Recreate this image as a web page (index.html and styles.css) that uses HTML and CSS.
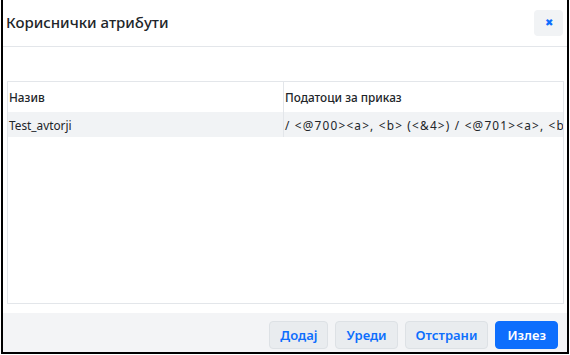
FILE: index.html
```html
<!DOCTYPE html>
<html lang="mk">
<head>
    <meta charset="UTF-8">
    <meta name="viewport" content="width=device-width, initial-scale=1.0">
    <title>Кориснички атрибути</title>
    <link rel="stylesheet" href="styles.css">
</head>
<body>
    <div class="modal">
        <div class="modal-header">
            <h5 class="modal-title">Кориснички атрибути</h5>
            <button class="btn-close">&#x2716;</button>
        </div>
        <div class="modal-body">
            <div class="table-wrap">
                <table class="attr-table">
                    <thead>
                        <tr>
                            <th class="col-name">Назив</th>
                            <th>Податоци за приказ</th>
                        </tr>
                    </thead>
                    <tbody>
                        <tr class="row-selected">
                            <td class="col-name">Test_avtorji</td>
                            <td class="col-data">/ &lt;@700&gt;&lt;a&gt;, &lt;b&gt; (&lt;&amp;4&gt;) / &lt;@701&gt;&lt;a&gt;, &lt;b&gt; (&lt;&amp;4&gt;)</td>
                        </tr>
                    </tbody>
                </table>
            </div>
        </div>
        <div class="modal-footer">
            <button class="btn btn-light">Додај</button>
            <button class="btn btn-light">Уреди</button>
            <button class="btn btn-light">Отстрани</button>
            <button class="btn btn-primary">Излез</button>
        </div>
    </div>
</body>
</html>
```

FILE: styles.css
```css
html,body{
    margin:0;
    font-family: "Noto Sans", "Open Sans", sans-serif;
    color:#212529;
    background:#fff;
}
.modal{
    margin-left:1px;
    width:568px;
    height:354px;
    box-sizing:border-box;
    border:2px solid #000;
    border-top:0;
    display:flex;
    flex-direction:column;
}
.modal-header{
    height:47px;
    box-sizing:border-box;
    border-bottom:1px solid #e3e6ea;
    display:flex;
    align-items:center;
    justify-content:space-between;
    padding:0 4px 0 3px;
}
.modal-title{
    margin:0;
    font-size:15px;
    font-weight:500;
    line-height:1;
    padding-bottom:2px;
}
.btn-close{
    width:29px;
    height:26px;
    border:0;
    border-radius:4px;
    background:#f1f3f5;
    color:#0d6efd;
    font-size:10px;
    padding:0;
    margin-bottom:1px;
}
.modal-body{
    flex:1;
    padding:34px 3px 9px 4px;
    display:flex;
}
.table-wrap{
    flex:1;
    border:1px solid #e3e6ea;
    overflow:hidden;
}
.attr-table{
    width:100%;
    table-layout:fixed;
    border-collapse:collapse;
    font-size:11.8px;
}
.attr-table th,
.attr-table td{
    text-align:left;
    white-space:nowrap;
    overflow:hidden;
    padding:0 1px;
}
.attr-table th{
    height:30px;
    font-weight:500;
}
.attr-table td{
    height:25px;
}
.attr-table .col-name{
    width:273px;
    border-right:1px solid #e3e6ea;
}
.attr-table .col-data{
    letter-spacing:1.2px;
}
.row-selected{
    background:#f1f3f5;
}
.modal-footer{
    height:39px;
    box-sizing:border-box;
    background:#f3f4f6;
    display:flex;
    align-items:flex-start;
    justify-content:flex-end;
    gap:7px;
    padding:8px 9px 0 0;
}
.btn{
    height:28px;
    padding:0 10px;
    border-radius:4px;
    font-family:inherit;
    font-size:13px;
    font-weight:600;
}
.btn-light{
    background:#e9ecef;
    border:1px solid #dde1e5;
    color:#0d6efd;
}
.btn-primary{
    background:#0d6efd;
    border:1px solid #0d6efd;
    color:#fff;
    padding:0 11px;
}
```
